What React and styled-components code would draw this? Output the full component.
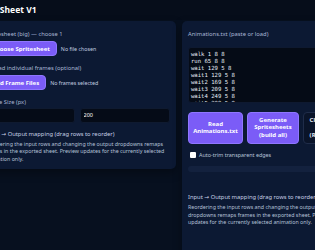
import React from "react";
import styled, { createGlobalStyle } from "styled-components";

const GlobalStyle = createGlobalStyle`
  html, body { margin: 0; padding: 0; background: #07101f; overflow: hidden; }
  body { font-family: "Noto Sans", "Open Sans", sans-serif; }
  * { box-sizing: border-box; }
`;

const Page = styled.div`
  width: 600px;
  min-height: 250px;
  margin-left: -32.5px;
  background: #07101f;
`;

const Header = styled.header`
  height: 20px;
  padding-left: 5px;
  display: flex;
  align-items: center;
  background: #060d1a;
`;

const Title = styled.h1`
  margin: 0;
  font-size: 8.5px;
  line-height: 10px;
  font-weight: 700;
  color: #ffffff;
`;

const Layout = styled.main`
  display: grid;
  grid-template-columns: 197px 1fr;
  gap: 6px;
  align-items: start;
  padding: 1px 0 0 11.5px;
`;

const Panel = styled.section`
  background: #0c1933;
  border-radius: 5px;
  padding: 9px 6px ${(p) => p.$bottom || "6px"};
  box-shadow: 0 4px 10px rgba(0, 0, 0, 0.35);
  min-height: ${(p) => p.$minHeight || "0"};
`;

const Field = styled.div`
  display: flex;
  flex-direction: column;
  gap: ${(p) => p.$gap || "3px"};
  margin-top: ${(p) => p.$top || "0"};
`;

const FieldLabel = styled.label`
  display: block;
  font-size: 5.8px;
  line-height: 8px;
  color: #a9b7d4;
`;

const FileRow = styled.div`
  display: flex;
  align-items: center;
  gap: 4px;
`;

const FileButton = styled.label`
  display: inline-flex;
  align-items: center;
  height: 15px;
  padding: 0 6px;
  border-radius: 4px;
  background: #7b5cf7;
  border: 1px solid #8f76ff;
  color: #ffffff;
  font-size: 6px;
  font-weight: 700;
  white-space: nowrap;
  cursor: pointer;
  input { display: none; }
`;

const FileNote = styled.span`
  font-size: 5.3px;
  line-height: 8px;
  color: #c3cde0;
`;

const SizeRow = styled.div`
  display: grid;
  grid-template-columns: 1fr 1fr;
  gap: 5px;
`;

const NumberInput = styled.input`
  width: 100%;
  height: 15px;
  padding: 0 2.5px;
  border-radius: 3px;
  border: 1px solid #0f1a30;
  background: #050b17;
  color: #ffffff;
  font-family: "Noto Sans", sans-serif;
  font-size: 5.5px;
  outline: none;
  -moz-appearance: textfield;
  &::-webkit-inner-spin-button, &::-webkit-outer-spin-button { -webkit-appearance: none; margin: 0; }
`;

const MapBlock = styled.div`
  margin-top: ${(p) => p.$top || "0"};
  max-width: ${(p) => p.$max || "none"};
`;

const MapHeading = styled.h3`
  margin: 0;
  font-size: 5.8px;
  line-height: 8px;
  font-weight: 400;
  color: #c6d0e6;
`;

const Arrow = styled.span`
  font-family: "DejaVu Sans", sans-serif;
`;

const Note = styled.p`
  margin: 3.3px 0 0;
  font-size: 5.3px;
  line-height: 7.4px;
  color: #b5c1d8;
`;

const Script = styled.textarea`
  display: block;
  width: 100%;
  height: 56px;
  margin-top: 9px;
  padding: 2.5px 2px;
  border: 1px solid #0e1930;
  border-radius: 3px;
  background: #050b16;
  color: #e8eef8;
  font-family: "DejaVu Sans Mono", "Liberation Mono", monospace;
  font-size: 5.6px;
  line-height: 7px;
  resize: none;
  overflow: hidden;
  outline: none;
`;

const ButtonGrid = styled.div`
  display: grid;
  grid-template-columns: 55px 52px 52px 52px;
  gap: 4px;
  margin-top: 9px;
`;

const ActionButton = styled.button`
  min-height: 31px;
  padding: 4px 4px;
  border-radius: 4px;
  border: 1px solid ${(p) => (p.$ghost ? "#1f2c49" : "#8f76ff")};
  background: ${(p) => (p.$ghost ? "#0a1429" : "#7b5cf7")};
  color: ${(p) => (p.$ghost ? "#e5ebf7" : "#ffffff")};
  font-family: "Noto Sans", sans-serif;
  font-size: 6px;
  line-height: 7.3px;
  font-weight: 700;
  text-align: center;
  cursor: pointer;
`;

const CheckRow = styled.label`
  display: flex;
  align-items: center;
  gap: 3.5px;
  margin-top: 7px;
  padding-left: 2px;
  font-size: 5.4px;
  line-height: 8px;
  color: #b8c3d9;
`;

const Check = styled.input`
  appearance: none;
  -webkit-appearance: none;
  margin: 0;
  width: 5.5px;
  height: 5.5px;
  border-radius: 1px;
  background: #ffffff;
  border: none;
`;

const Track = styled.div`
  height: 6px;
  margin-top: 7px;
  border-radius: 3px;
  background: #13213e;
`;

const SCRIPT = `walk 1 8 8
run 65 8 8
wait 129 5 8
wait1 129 5 8
wait2 169 5 8
wait3 209 5 8
wait4 249 5 8
wait5 289 5 8
idle 329 4 8`;

const NOTE =
  "Reordering the input rows and changing the output dropdowns remaps frames in the exported sheet. Preview updates for the currently selected animation only.";

function Mapping({ top, max }) {
  return (
    <MapBlock $top={top} $max={max}>
      <MapHeading>
        Input <Arrow>→</Arrow> Output mapping (drag rows to reorder)
      </MapHeading>
      <Note>{NOTE}</Note>
    </MapBlock>
  );
}

export default function App() {
  return (
    <Page>
      <GlobalStyle />
      <Header>
        <Title>Sprite Sheet V1</Title>
      </Header>
      <Layout>
        <Panel $bottom="5.5px">
          <Field>
            <FieldLabel>Spritesheet (big) — choose 1</FieldLabel>
            <FileRow>
              <FileButton>
                Choose Spritesheet
                <input type="file" accept="image/*" />
              </FileButton>
              <FileNote>No file chosen</FileNote>
            </FileRow>
          </Field>
          <Field $top="8px">
            <FieldLabel>Or load individual frames (optional)</FieldLabel>
            <FileRow>
              <FileButton>
                Add Frame Files
                <input type="file" multiple accept="image/*" />
              </FileButton>
              <FileNote>No frames selected</FileNote>
            </FileRow>
          </Field>
          <Field $top="7.5px" $gap="2px">
            <FieldLabel>Frame Size (px)</FieldLabel>
            <SizeRow>
              <NumberInput type="number" defaultValue="200" />
              <NumberInput type="number" defaultValue="200" />
            </SizeRow>
          </Field>
          <Mapping top="7px" />
        </Panel>

        <Panel $minHeight="240px">
          <FieldLabel>Animations.txt (paste or load)</FieldLabel>
          <Script defaultValue={SCRIPT} spellCheck={false} />
          <ButtonGrid>
            <ActionButton>Read Animations.txt</ActionButton>
            <ActionButton>Generate Spritesheets (build all)</ActionButton>
            <ActionButton $ghost>
              Clear Cached
              <br />
              Data
              <br />
              (Regenerate)
            </ActionButton>
            <ActionButton $ghost>Download ZIP</ActionButton>
          </ButtonGrid>
          <CheckRow>
            <Check type="checkbox" />
            Auto-trim transparent edges
          </CheckRow>
          <Track />
          <Mapping top="21px" max="150px" />
        </Panel>
      </Layout>
    </Page>
  );
}
